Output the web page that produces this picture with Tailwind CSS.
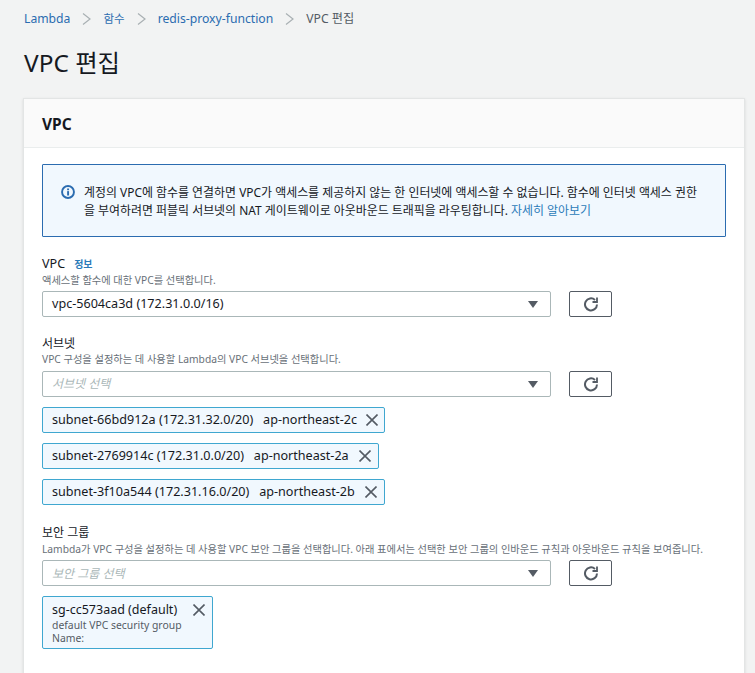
<!DOCTYPE html>
<html lang="ko">
<head>
    <meta charset="UTF-8">
    <meta name="viewport" content="width=device-width, initial-scale=1.0">
    <title>VPC 편집</title>
    <script src="https://cdn.jsdelivr.net/npm/@tailwindcss/browser@4"></script>
</head>
<body class="bg-[#f2f3f3] h-[673px] overflow-hidden text-[#16191f] font-['Noto_Sans','Noto_Sans_CJK_KR',sans-serif]">

    <!-- Breadcrumb -->
    <nav class="flex items-center h-[38px] pl-[24px] text-[12.2px] text-[#2b6cb0]">
        <span>Lambda</span>
        <svg class="w-[9px] h-[12px] mx-[12px]" viewBox="0 0 9 12" fill="none" stroke="#a9b0b3" stroke-width="1.2"><path d="M1 .5l7 5.5-7 5.5"/></svg>
        <span class="text-[11.5px]">함수</span>
        <svg class="w-[9px] h-[12px] mx-[12px]" viewBox="0 0 9 12" fill="none" stroke="#a9b0b3" stroke-width="1.2"><path d="M1 .5l7 5.5-7 5.5"/></svg>
        <span>redis-proxy-function</span>
        <svg class="w-[9px] h-[12px] mx-[12px]" viewBox="0 0 9 12" fill="none" stroke="#a9b0b3" stroke-width="1.2"><path d="M1 .5l7 5.5-7 5.5"/></svg>
        <span class="text-[#545b64]">VPC 편집</span>
    </nav>

    <h1 class="pl-[24px] mt-[6px] h-[54px] text-[24.4px] leading-[38px] font-normal">VPC 편집</h1>

    <!-- Card -->
    <div class="ml-[23px] w-[722px] bg-white border border-[#e3e5e5] shadow-sm">
        <div class="h-[49px] bg-[#fafafa] border-b border-[#eaeded] pl-[18px] pt-[3px] flex items-center text-[15.5px] font-bold">VPC</div>

        <div class="pl-[18px] pr-[18px] pt-[16px]">
            <!-- Info alert -->
            <div class="flex h-[73px] border border-[#2b6cb0] bg-[#f1f8fe] rounded-[1px] pl-[18px] pt-[19px] text-[11.95px] leading-[18px] text-[#16191f]">
                <svg class="w-[14px] h-[14px] mt-[1px] mr-[9px] shrink-0" viewBox="0 0 16 16" fill="none">
                    <circle cx="8" cy="8" r="6.8" stroke="#2b6cb0" stroke-width="2.2"/>
                    <rect x="7" y="7" width="2.2" height="5" fill="#2b6cb0"/>
                    <rect x="7" y="4" width="2.2" height="2" fill="#2b6cb0"/>
                </svg>
                <p class="w-[640px] whitespace-nowrap">계정의 VPC에 함수를 연결하면 VPC가 액세스를 제공하지 않는 한 인터넷에 액세스할 수 없습니다. 함수에 인터넷 액세스 권한<br>을 부여하려면 퍼블릭 서브넷의 NAT 게이트웨이로 아웃바운드 트래픽을 라우팅합니다. <span class="text-[#2b7bb9]">자세히 알아보기</span></p>
            </div>

            <!-- VPC -->
            <div class="mt-[18px] h-[18px] flex items-center text-[12.6px]">VPC <span class="ml-[9px] text-[10px] font-bold text-[#2b7bb9]">정보</span></div>
            <p class="h-[15px] text-[10.25px] leading-[14px] text-[#687078]">액세스할 함수에 대한 VPC를 선택합니다.</p>
            <div class="mt-[3px] flex">
                <div class="relative w-[509px] h-[26px] border border-[#aab7b8] rounded-[2px] pl-[9px] text-[12.6px] leading-[23px]">vpc-5604ca3d (172.31.0.0/16)
                    <span class="absolute right-[12px] top-[9px] w-0 h-0 border-x-[5px] border-x-transparent border-t-[7px] border-t-[#545b64]"></span>
                </div>
                <div class="ml-[18px] w-[43px] h-[26px] border border-[#545b64] rounded-[2px] flex items-center justify-center">
                    <svg class="w-[16px] h-[16px]" viewBox="0 0 16 16" fill="none" stroke="#545b64" stroke-width="2"><path d="M14 8.5a6 6 0 1 1-2-4.6"/><path d="M14 1.5V6H9.5" stroke-width="1.8"/></svg>
                </div>
            </div>

            <!-- Subnet -->
            <div class="mt-[18px] h-[18px] flex items-center text-[12px]">서브넷</div>
            <p class="h-[15px] text-[10.25px] leading-[13px] text-[#687078]">VPC 구성을 설정하는 데 사용할 Lambda의 VPC 서브넷을 선택합니다.</p>
            <div class="mt-[3px] flex">
                <div class="relative w-[509px] h-[26px] border border-[#aab7b8] rounded-[2px] pl-[9px] text-[12px] italic leading-[24px] text-[#aab7b8]">서브넷 선택
                    <span class="absolute right-[12px] top-[9px] w-0 h-0 border-x-[5px] border-x-transparent border-t-[7px] border-t-[#545b64]"></span>
                </div>
                <div class="ml-[18px] w-[43px] h-[26px] border border-[#545b64] rounded-[2px] flex items-center justify-center">
                    <svg class="w-[16px] h-[16px]" viewBox="0 0 16 16" fill="none" stroke="#545b64" stroke-width="2"><path d="M14 8.5a6 6 0 1 1-2-4.6"/><path d="M14 1.5V6H9.5" stroke-width="1.8"/></svg>
                </div>
            </div>
            <div class="mt-[10px] flex flex-col items-start gap-[10px] text-[12.6px]">
                <div class="flex items-center h-[26px] w-[343px] border border-[#3fa7d0] bg-[#f1f8fe] rounded-[2px] pl-[9px]">
                    <span class="whitespace-pre">subnet-66bd912a (172.31.32.0/20)   ap-northeast-2c</span>
                    <svg class="ml-auto mr-[6px] w-[12px] h-[12px]" viewBox="0 0 12 12" fill="none" stroke="#545b64" stroke-width="1.6"><path d="M.5.5l11 11M11.5.5l-11 11"/></svg>
                </div>
                <div class="flex items-center h-[26px] w-[337px] border border-[#3fa7d0] bg-[#f1f8fe] rounded-[2px] pl-[9px]">
                    <span class="whitespace-pre">subnet-2769914c (172.31.0.0/20)   ap-northeast-2a</span>
                    <svg class="ml-auto mr-[7px] w-[12px] h-[12px]" viewBox="0 0 12 12" fill="none" stroke="#545b64" stroke-width="1.6"><path d="M.5.5l11 11M11.5.5l-11 11"/></svg>
                </div>
                <div class="flex items-center h-[26px] w-[343px] border border-[#3fa7d0] bg-[#f1f8fe] rounded-[2px] pl-[9px]">
                    <span class="whitespace-pre">subnet-3f10a544 (172.31.16.0/20)   ap-northeast-2b</span>
                    <svg class="ml-auto mr-[7px] w-[12px] h-[12px]" viewBox="0 0 12 12" fill="none" stroke="#545b64" stroke-width="1.6"><path d="M.5.5l11 11M11.5.5l-11 11"/></svg>
                </div>
            </div>

            <!-- Security group -->
            <div class="mt-[19px] h-[18px] flex items-center text-[12px]">보안 그룹</div>
            <p class="h-[15px] text-[10.25px] leading-[15px] text-[#687078] whitespace-nowrap">Lambda가 VPC 구성을 설정하는 데 사용할 VPC 보안 그룹을 선택합니다. 아래 표에서는 선택한 보안 그룹의 인바운드 규칙과 아웃바운드 규칙을 보여줍니다.</p>
            <div class="mt-[3px] flex">
                <div class="relative w-[509px] h-[26px] border border-[#aab7b8] rounded-[2px] pl-[9px] text-[12px] italic leading-[26px] text-[#aab7b8]">보안 그룹 선택
                    <span class="absolute right-[12px] top-[9px] w-0 h-0 border-x-[5px] border-x-transparent border-t-[7px] border-t-[#545b64]"></span>
                </div>
                <div class="ml-[18px] w-[43px] h-[26px] border border-[#545b64] rounded-[2px] flex items-center justify-center">
                    <svg class="w-[16px] h-[16px]" viewBox="0 0 16 16" fill="none" stroke="#545b64" stroke-width="2"><path d="M14 8.5a6 6 0 1 1-2-4.6"/><path d="M14 1.5V6H9.5" stroke-width="1.8"/></svg>
                </div>
            </div>
            <div class="relative mt-[10px] w-[171px] h-[53px] border border-[#3fa7d0] bg-[#f1f8fe] rounded-[2px] pl-[9px] pt-[4px] text-[12.5px] leading-[17px]">
                sg-cc573aad (default)
                <div class="mt-[1px] text-[10.4px] leading-[13px] text-[#545b64]">default VPC security group<br>Name:</div>
                <svg class="absolute right-[7px] top-[7px] w-[12px] h-[12px]" viewBox="0 0 12 12" fill="none" stroke="#545b64" stroke-width="1.6"><path d="M.5.5l11 11M11.5.5l-11 11"/></svg>
            </div>
            <div class="h-[40px]"></div>
        </div>
    </div>
</body>
</html>
